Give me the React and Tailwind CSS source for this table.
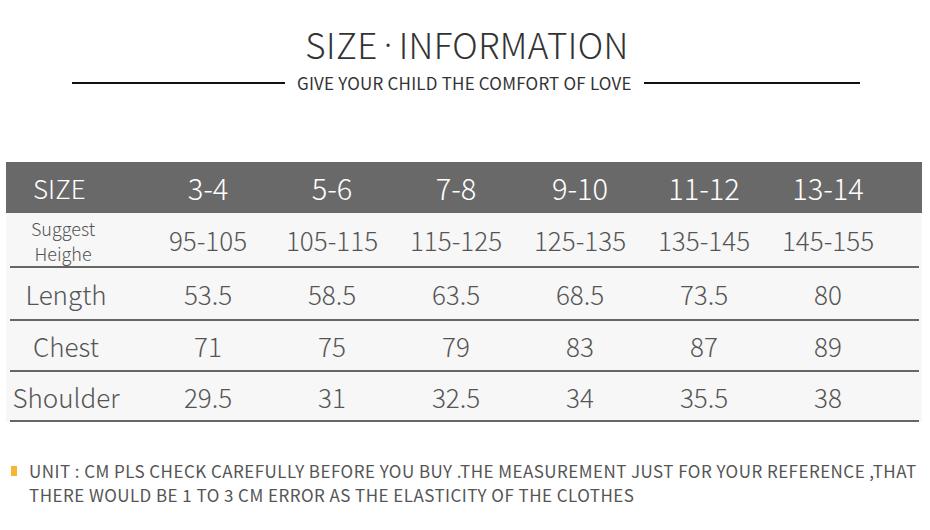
const FONT = { fontFamily: '"Noto Sans CJK SC", "Noto Sans", sans-serif' };

const SIZES = ["3-4", "5-6", "7-8", "9-10", "11-12", "13-14"];

const ROWS = [
  { label: "Length", values: ["53.5", "58.5", "63.5", "68.5", "73.5", "80"], h: "h-[53px]" },
  { label: "Chest", values: ["71", "75", "79", "83", "87", "89"], h: "h-[51px]" },
  { label: "Shoulder", values: ["29.5", "31", "32.5", "34", "35.5", "38"], h: "h-[50px]" },
];

const GRID = "grid grid-cols-[140px_repeat(6,124px)_1fr] items-center";

export default function App() {
  return (
    <div className="w-[930px] h-[530px] bg-white overflow-hidden" style={FONT}>
      {/* Title */}
      <div className="pt-[22px] flex justify-center">
        <h1 className="text-[35px] leading-[44px] font-light text-[#333] tracking-[0.4px] pl-[4px] flex items-center">
          SIZE
          <span className="mx-[6px] font-['Noto_Sans']">·</span>
          INFORMATION
        </h1>
      </div>
      <div className="mt-[6px] flex items-center pl-[72px]">
        <div className="w-[213px] h-[2px] bg-[#111]" />
        <p className="mx-[12px] text-[17px] leading-[22px] text-[#333] tracking-[0.2px] whitespace-nowrap">
          GIVE YOUR CHILD THE COMFORT OF LOVE
        </p>
        <div className="w-[216px] h-[2px] bg-[#111]" />
      </div>

      {/* Table */}
      <div className="mt-[68px] ml-[6px] w-[916px] bg-[#f7f7f7]">
        <div className={`${GRID} h-[51px] bg-[#696969] text-white font-light`}>
          <div className="text-[26px] pl-[27px]">SIZE</div>
          {SIZES.map((s) => (
            <div key={s} className="text-center text-[29px]">{s}</div>
          ))}
        </div>

        <div className="pl-[4px] pr-[3px]">
          <div className={`${GRID} h-[55px] border-b-2 border-[#666] text-[#555] font-light`}>
            <div className="text-[18px] leading-[25px] text-center pr-[34px] pt-[2px]">
              Suggest
              <br />
              Heighe
            </div>
            {["95-105", "105-115", "115-125", "125-135", "135-145", "145-155"].map((v) => (
              <div key={v} className="text-center text-[26px] pr-[4px] -ml-[4px]">{v}</div>
            ))}
          </div>

          {ROWS.map((r) => (
            <div key={r.label} className={`${GRID} ${r.h} border-b-2 border-[#666] text-[#555] font-light`}>
              <div className="text-[26px] text-center pr-[28px]">{r.label}</div>
              {r.values.map((v, i) => (
                <div key={i} className="text-center text-[26px] pr-[8px]">{v}</div>
              ))}
            </div>
          ))}
        </div>
      </div>

      {/* Note */}
      <div className="mt-[37px] pl-[11px] flex text-[#555] text-[17px] leading-[24px] tracking-[0.45px]">
        <span className="mt-[7px] w-[6px] h-[10px] bg-[#f5b731] shrink-0" />
        <p className="ml-[12px] whitespace-nowrap">
          UNIT : CM PLS CHECK CAREFULLY BEFORE YOU BUY .THE MEASUREMENT JUST FOR YOUR REFERENCE ,THAT
          <br />
          THERE WOULD BE 1 TO 3 CM ERROR AS THE ELASTICITY OF THE CLOTHES
        </p>
      </div>
    </div>
  );
}
